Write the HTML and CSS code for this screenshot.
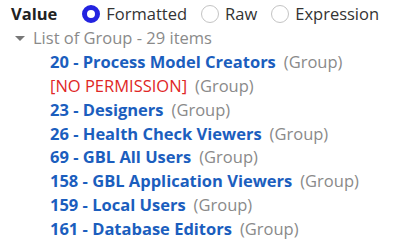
FILE: index.html
```html
<!DOCTYPE html>
<html>
<head>
<meta charset="utf-8">
<link rel="stylesheet" href="styles.css">
</head>
<body>
<div class="panel">
  <div class="header">
    <span class="label">Value</span>
    <div class="radios">
      <span class="opt"><span class="radio checked"></span>Formatted</span>
      <span class="opt"><span class="radio"></span>Raw</span>
      <span class="opt"><span class="radio"></span>Expression</span>
    </div>
  </div>
  <div class="tree">
    <div class="toggle"><span class="caret"></span>List of Group - 29 items</div>
    <ul class="items">
      <li><span class="link">20 - Process Model Creators</span><span class="type">(Group)</span></li>
      <li><span class="noperm">[NO PERMISSION]</span><span class="type">(Group)</span></li>
      <li><span class="link">23 - Designers</span><span class="type">(Group)</span></li>
      <li><span class="link">26 - Health Check Viewers</span><span class="type">(Group)</span></li>
      <li><span class="link">69 - GBL All Users</span><span class="type">(Group)</span></li>
      <li><span class="link">158 - GBL Application Viewers</span><span class="type">(Group)</span></li>
      <li><span class="link">159 - Local Users</span><span class="type">(Group)</span></li>
      <li><span class="link">161 - Database Editors</span><span class="type">(Group)</span></li>
    </ul>
  </div>
</div>
</body>
</html>
```
FILE: styles.css
```css
html, body {
  margin: 0;
  padding: 0;
  background: #ffffff;
}
body {
  font-family: "Open Sans", "Noto Sans", sans-serif;
  font-size: 16.5px;
  line-height: 24px;
  color: #222;
}
.panel {
  padding: 2px 0 0 11px;
}
.header {
  display: flex;
  align-items: center;
  height: 24px;
}
.label {
  font-weight: 700;
  color: #222;
  margin-right: 25px;
}
.radios {
  display: flex;
  align-items: center;
  gap: 14px;
}
.opt {
  display: flex;
  align-items: center;
  color: #333;
}
.radio {
  box-sizing: border-box;
  width: 18px;
  height: 18px;
  border-radius: 50%;
  border: 1px solid #c4c4c4;
  margin-right: 6px;
  background: #fff;
}
.radio.checked {
  border: 5px solid #2323e0;
  background: #fff;
}
.toggle {
  display: flex;
  align-items: center;
  color: #8a8a8a;
  padding-left: 4px;
  height: 24px;
}
.caret {
  width: 0;
  height: 0;
  border-left: 5px solid transparent;
  border-right: 5px solid transparent;
  border-top: 5px solid #777;
  margin-right: 8px;
}
.items {
  list-style: none;
  margin: 0;
  padding: 0 0 0 39px;
}
.items li {
  height: 23.85px;
  line-height: 23.85px;
  white-space: nowrap;
}
.link {
  font-weight: 700;
  color: #1b5ebe;
}
.noperm {
  color: #e02626;
}
.type {
  color: #8a8a8a;
  margin-left: 8px;
}
```
